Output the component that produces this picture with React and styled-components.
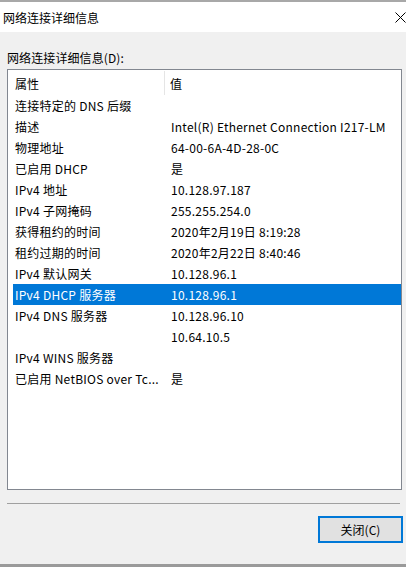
import React from "react";
import styled, { createGlobalStyle } from "styled-components";

const Global = createGlobalStyle`
  html, body { margin: 0; padding: 0; background: #f0f0f0; }
  body { font-family: "Noto Sans CJK SC", "Noto Sans", sans-serif; font-size: 12px; color: #000; }
`;

const Window = styled.div`
  width: 406px;
  height: 567px;
  box-sizing: border-box;
  border-top: 2px solid #a8a8a8;
  border-bottom: 3px solid #9a9a9a;
  display: flex;
  flex-direction: column;
  background: #f0f0f0;
  overflow: hidden;
`;

const TitleBar = styled.div`
  height: 30px;
  flex: none;
  background: #fff;
  display: flex;
  align-items: center;
  justify-content: space-between;
  padding: 0 0 0 3px;
`;

const Title = styled.span`
  font-size: 12px;
  line-height: 16px;
  margin-top: 2px;
`;

const CloseIcon = styled.svg`
  width: 11px;
  height: 11px;
`;

const Body = styled.div`
  flex: 1;
  display: flex;
  flex-direction: column;
  padding: 18px 4px 0 7px;
`;

const Label = styled.div`
  line-height: 16px;
  height: 16px;
  margin-bottom: 3px;
  letter-spacing: 0.1px;
`;

const ListBox = styled.div`
  width: 395px;
  height: 421px;
  box-sizing: border-box;
  border: 1px solid #828790;
  background: #fff;
  display: flex;
  flex-direction: column;
`;

const Header = styled.div`
  height: 25px;
  flex: none;
  display: grid;
  grid-template-columns: 157px 1fr;
`;

const HeaderCell = styled.div`
  display: flex;
  align-items: center;
  padding-left: ${p => p.$pad}px;
  padding-top: 1px;
  border-right: ${p => (p.$divider ? "1px solid #e5e5e5" : "none")};
  margin: 1px 0 0 0;
`;

const Rows = styled.div`
  display: flex;
  flex-direction: column;
  padding-left: 5px;
`;

const Row = styled.div`
  height: 21px;
  display: grid;
  grid-template-columns: 152px 1fr;
  align-items: center;
  background: ${p => (p.$selected ? "#0078d7" : "transparent")};
  color: ${p => (p.$selected ? "#fff" : "#000")};
`;

const Cell = styled.div`
  padding-left: ${p => p.$pad}px;
  white-space: nowrap;
  overflow: hidden;
  line-height: 16px;
  letter-spacing: 0.25px;
`;

const Separator = styled.div`
  width: 393px;
  height: 1px;
  background: #a0a0a0;
  margin-top: 13px;
`;

const Footer = styled.div`
  display: flex;
  justify-content: flex-end;
  margin-top: 12px;
`;

const Button = styled.button`
  width: 85px;
  height: 27px;
  box-sizing: border-box;
  border: 2px solid #0078d7;
  background: #e1e1e1;
  font-family: inherit;
  font-size: 12px;
  color: #000;
  padding: 0;
  margin-right: -1px;
`;

const rows = [
  ["连接特定的 DNS 后缀", ""],
  ["描述", "Intel(R) Ethernet Connection I217-LM"],
  ["物理地址", "64-00-6A-4D-28-0C"],
  ["已启用 DHCP", "是"],
  ["IPv4 地址", "10.128.97.187"],
  ["IPv4 子网掩码", "255.255.254.0"],
  ["获得租约的时间", "2020年2月19日 8:19:28"],
  ["租约过期的时间", "2020年2月22日 8:40:46"],
  ["IPv4 默认网关", "10.128.96.1"],
  ["IPv4 DHCP 服务器", "10.128.96.1", true],
  ["IPv4 DNS 服务器", "10.128.96.10"],
  ["", "10.64.10.5"],
  ["IPv4 WINS 服务器", ""],
  ["已启用 NetBIOS over Tc...", "是"],
];

export default function App() {
  return (
    <>
      <Global />
      <Window>
        <TitleBar>
          <Title>网络连接详细信息</Title>
          <CloseIcon viewBox="0 0 11 11">
            <path d="M0.5 0.5 L10.5 10.5 M10.5 0.5 L0.5 10.5" stroke="#000" strokeWidth="1" fill="none" />
          </CloseIcon>
        </TitleBar>
        <Body>
          <Label>网络连接详细信息(D):</Label>
          <ListBox>
            <Header>
              <HeaderCell $pad={7} $divider>属性</HeaderCell>
              <HeaderCell $pad={5}>值</HeaderCell>
            </Header>
            <Rows>
              {rows.map(([k, v, sel], i) => (
                <Row key={i} $selected={sel}>
                  <Cell $pad={2}>{k}</Cell>
                  <Cell $pad={6}>{v}</Cell>
                </Row>
              ))}
            </Rows>
          </ListBox>
          <Separator />
          <Footer>
            <Button>关闭(C)</Button>
          </Footer>
        </Body>
      </Window>
    </>
  );
}
